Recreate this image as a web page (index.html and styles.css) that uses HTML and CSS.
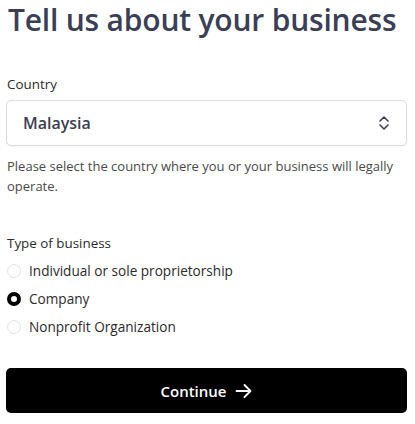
FILE: index.html
```html
<!DOCTYPE html>
<html>
<head>
<meta charset="utf-8">
<link rel="stylesheet" href="styles.css">
</head>
<body>
<main class="form">
  <h1 class="title">Tell us about your business</h1>
  <div class="field">
    <label class="label">Country</label>
    <div class="select">
      <span class="select-value">Malaysia</span>
      <svg class="chev" width="12" height="16" viewBox="0 0 12 16"><path d="M2 6 L6 2 L10 6 M2 10 L6 14 L10 10" fill="none" stroke="#3b3f50" stroke-width="1.6" stroke-linecap="round" stroke-linejoin="round"/></svg>
    </div>
    <p class="help">Please select the country where you or your business will legally operate.</p>
  </div>
  <div class="field type">
    <div class="label">Type of business</div>
    <div class="radios">
      <div class="radio"><span class="dot"></span><span>Individual or sole proprietorship</span></div>
      <div class="radio"><span class="dot on"></span><span>Company</span></div>
      <div class="radio"><span class="dot"></span><span>Nonprofit Organization</span></div>
    </div>
  </div>
  <button class="btn">Continue
    <svg width="18" height="16" viewBox="0 0 18 16"><path d="M1.5 8 H15.5 M9.5 2 L15.5 8 L9.5 14" fill="none" stroke="#fff" stroke-width="1.8" stroke-linecap="round" stroke-linejoin="round"/></svg>
  </button>
</main>
</body>
</html>
```
FILE: styles.css
```css
* { box-sizing: border-box; }
body {
  margin: 0;
  background: #fff;
  font-family: "Open Sans", "Noto Sans", sans-serif;
  color: #333;
}
.form {
  width: 401px;
  margin-left: 6px;
  padding-top: 0;
  display: flex;
  flex-direction: column;
}
.title {
  margin: 0;
  font-size: 30px;
  font-weight: 600;
  line-height: 40px;
  color: #3a3f55;
  padding-left: 2px;
  letter-spacing: -0.2px;
}
.field { margin-top: 35px; }
.label {
  display: block;
  font-size: 13.4px;
  line-height: 18px;
  color: #2b2b2b;
  padding-left: 1px;
  margin-bottom: 7px;
}
.select {
  height: 46px;
  border: 1px solid #dcdcdc;
  border-radius: 5px;
  display: flex;
  align-items: center;
  justify-content: space-between;
  padding: 0 16px 0 16px;
  box-shadow: 0 1px 1px rgba(0,0,0,0.04);
}
.select-value {
  font-size: 16px;
  font-weight: 600;
  color: #3b3f50;
}
.help {
  margin: 10px 0 0 1px;
  font-size: 13px;
  line-height: 20px;
  color: #4a4a4a;
}
.type { margin-top: 38px; }
.type .label { margin-bottom: 10px; }
.radios { display: flex; flex-direction: column; gap: 10px; }
.radio {
  display: flex;
  align-items: center;
  gap: 8px;
  font-size: 13.6px;
  line-height: 18px;
  color: #2b2b2b;
  padding-left: 1px;
}
.dot {
  width: 14px;
  height: 14px;
  border-radius: 50%;
  border: 1px solid #e2e2e2;
  background: #fff;
  flex: none;
}
.dot.on {
  border: 4px solid #000;
}
.btn {
  margin-top: 32px;
  height: 45px;
  border: none;
  border-radius: 5px;
  background: #000;
  color: #fff;
  font-family: inherit;
  font-size: 15px;
  font-weight: 600;
  display: flex;
  align-items: center;
  justify-content: center;
  gap: 8px;
}
```
